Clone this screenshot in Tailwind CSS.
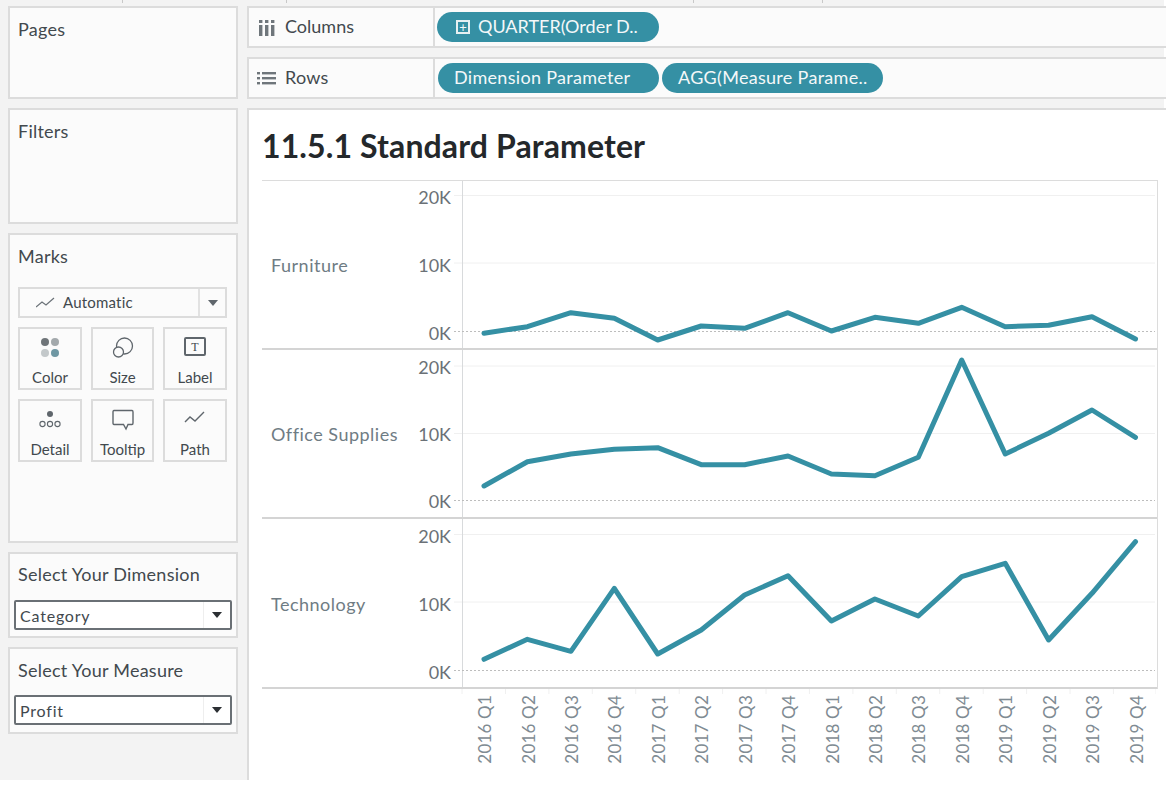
<!DOCTYPE html>
<html lang="en">
<head>
  <meta charset="UTF-8" />
  <title>11.5.1 Standard Parameter</title>
  <script src="https://cdn.jsdelivr.net/npm/@tailwindcss/browser@4"></script>
</head>
<body class="w-[1167px] h-[785px] overflow-hidden bg-white font-['Lato','Open_Sans',sans-serif] text-[#42494e]">

  <div class="relative w-[1164px] h-[780px] bg-[#f3f3f3] pt-[6px] pl-2 flex gap-[9px]">
    <!-- little ticks along the top edge -->
    <span class="absolute top-0 left-[122px] w-px h-[3px] bg-[#c8c8c8]"></span>
    <span class="absolute top-0 left-[286px] w-px h-[3px] bg-[#c8c8c8]"></span>
    <span class="absolute top-0 left-[693px] w-px h-[3px] bg-[#c8c8c8]"></span>
    <span class="absolute top-0 left-[822px] w-px h-[3px] bg-[#c8c8c8]"></span>

    <!-- left cards -->
    <div class="w-[230px] shrink-0 flex flex-col gap-[9px]">
      <div class="h-[93px] bg-[#fbfbfb] border-2 border-[#dcdcdc] pl-[8px] pt-[9px] text-[18px] leading-6 tracking-[0.25px]">Pages</div>
      <div class="h-[116px] bg-[#fbfbfb] border-2 border-[#dcdcdc] pl-[8px] pt-[9px] text-[18px] leading-6 tracking-[0.25px]">Filters</div>

      <div class="h-[310px] bg-[#fbfbfb] border-2 border-[#dcdcdc] pl-[8px] pr-[9px] pt-[9px]">
        <div class="text-[18px] leading-6 tracking-[0.25px]">Marks</div>
        <div class="mt-[19px] h-[31px] border-2 border-[#dcdcdc] flex items-center text-[15px]">
          <svg class="ml-[16px] w-[19px] h-[12px]" viewBox="0 0 19 12" fill="none" stroke="#6b7278" stroke-width="1.2"><path d="M0 10 L6 5 L10 8 L18 1"/></svg>
          <span class="ml-[8px] flex-1 tracking-[0.2px]">Automatic</span>
          <span class="w-[27px] h-full border-l-2 border-[#e2e2e2] flex items-center justify-center">
            <span class="w-0 h-0 border-x-[5px] border-x-transparent border-t-[6px] border-t-[#5f666c]"></span>
          </span>
        </div>
        <div class="mt-[9px] grid grid-cols-[64px_63px_64px] justify-between gap-y-[9px] text-[15px] text-center">
          <div class="h-[63px] border-2 border-[#dcdcdc] flex flex-col items-center">
            <svg class="mt-[8px] w-[22px] h-[22px]" viewBox="0 0 22 22"><circle cx="6" cy="5" r="4" fill="#6f7579"/><circle cx="16" cy="5" r="4" fill="#a3a9ac"/><circle cx="6" cy="16" r="4" fill="#c3c8ca"/><circle cx="16" cy="16" r="4" fill="#6f97a3"/></svg>
            <span class="mt-[8px] leading-5">Color</span>
          </div>
          <div class="h-[63px] border-2 border-[#dcdcdc] flex flex-col items-center">
            <svg class="mt-[8px] w-[24px] h-[22px]" viewBox="0 0 24 22" fill="none" stroke="#5f666c" stroke-width="1.3"><circle cx="13.5" cy="9" r="8"/><circle cx="7.5" cy="15" r="5" fill="#fbfbfb"/></svg>
            <span class="mt-[8px] leading-5">Size</span>
          </div>
          <div class="h-[63px] border-2 border-[#dcdcdc] flex flex-col items-center">
            <span class="mt-[8px] w-[22px] h-[19px] border-2 border-[#5f666c] rounded-[2px] flex items-center justify-center font-['Liberation_Serif',serif] text-[12px] leading-none">T</span>
            <span class="mt-[11px] leading-5">Label</span>
          </div>
          <div class="h-[63px] border-2 border-[#dcdcdc] flex flex-col items-center">
            <svg class="mt-[8px] w-[24px] h-[22px]" viewBox="0 0 24 22" fill="none" stroke="#5f666c" stroke-width="1.1"><circle cx="12" cy="5" r="3" fill="#5f666c" stroke="none"/><circle cx="4.5" cy="15" r="2.6"/><circle cx="12" cy="15" r="2.6"/><circle cx="19.5" cy="15" r="2.6"/></svg>
            <span class="mt-[8px] leading-5">Detail</span>
          </div>
          <div class="h-[63px] border-2 border-[#dcdcdc] flex flex-col items-center">
            <svg class="mt-[8px] w-[24px] h-[22px]" viewBox="0 0 24 22" fill="none" stroke="#5f666c" stroke-width="1.4"><path d="M3 1.5 H21 Q22 1.5 22 3 V14 Q22 15.5 21 15.5 H17 L15 20 L12.5 15.5 H3 Q2 15.5 2 14 V3 Q2 1.5 3 1.5 Z"/></svg>
            <span class="mt-[8px] leading-5">Tooltip</span>
          </div>
          <div class="h-[63px] border-2 border-[#dcdcdc] flex flex-col items-center">
            <svg class="mt-[8px] w-[24px] h-[22px]" viewBox="0 0 24 22" fill="none" stroke="#5f666c" stroke-width="1.4"><path d="M2 13 L7 8 L12 12 L21 3"/></svg>
            <span class="mt-[8px] leading-5">Path</span>
          </div>
        </div>
      </div>

      <div class="h-[86px] bg-[#fbfbfb] border-2 border-[#dcdcdc] pt-[8px]">
        <div class="pl-[8px] text-[18px] leading-6 tracking-[0.25px]">Select Your Dimension</div>
        <div class="ml-[4px] mt-[14px] w-[218px] h-[30px] bg-white border-2 border-[#6a7075] rounded-[2px] flex items-center text-[16px] tracking-[0.8px]">
          <span class="ml-[4px] pt-[1px] flex-1">Category</span>
          <span class="w-[27px] h-full flex items-center justify-center border-l border-[#eeeeee]">
            <span class="w-0 h-0 border-x-[5px] border-x-transparent border-t-[6px] border-t-[#2b2f33]"></span>
          </span>
        </div>
      </div>
      <div class="h-[87px] bg-[#fbfbfb] border-2 border-[#dcdcdc] pt-[9px]">
        <div class="pl-[8px] text-[18px] leading-6 tracking-[0.25px]">Select Your Measure</div>
        <div class="ml-[4px] mt-[13px] w-[218px] h-[30px] bg-white border-2 border-[#6a7075] rounded-[2px] flex items-center text-[16px] tracking-[0.8px]">
          <span class="ml-[4px] pt-[1px] flex-1">Profit</span>
          <span class="w-[27px] h-full flex items-center justify-center border-l border-[#eeeeee]">
            <span class="w-0 h-0 border-x-[5px] border-x-transparent border-t-[6px] border-t-[#2b2f33]"></span>
          </span>
        </div>
      </div>
    </div>

    <!-- right side -->
    <div class="flex-1 flex flex-col gap-[9px]">
      <div class="h-[42px] bg-[#fbfbfb] border-2 border-r-0 border-[#dcdcdc] flex items-center text-[18px]">
        <svg class="ml-[9px] w-[17px] h-[17px]" viewBox="0 0 17 17" fill="#6f767b"><rect x="1" y="1" width="3.4" height="3"/><rect x="1" y="6" width="3.4" height="11"/><rect x="7" y="1" width="3.4" height="3"/><rect x="7" y="6" width="3.4" height="11"/><rect x="13" y="1" width="3.4" height="3"/><rect x="13" y="6" width="3.4" height="11"/></svg>
        <span class="ml-[10px] w-[148px] pb-[1px]">Columns</span>
        <div class="h-full border-l-2 border-[#dcdcdc] pl-[2px] flex items-center">
          <div class="w-[222px] h-[30px] rounded-full bg-[#3590a4] text-[#f4f8f9] flex items-center pl-[19px] text-[18px]">
            <span class="w-[14px] h-[14px] border-2 border-[#e6f0f2] flex items-center justify-center text-[13px] leading-none">+</span>
            <span class="ml-[8px] pb-[1px]">QUARTER(Order D..</span>
          </div>
        </div>
      </div>
      <div class="h-[42px] bg-[#fbfbfb] border-2 border-r-0 border-[#dcdcdc] flex items-center text-[18px]">
        <svg class="ml-[8px] w-[19px] h-[15px]" viewBox="0 0 19 15" fill="#6f767b"><rect x="0" y="1" width="3" height="2.4"/><rect x="5" y="1" width="14" height="2.4"/><rect x="0" y="6" width="3" height="2.4"/><rect x="5" y="6" width="14" height="2.4"/><rect x="0" y="11" width="3" height="2.4"/><rect x="5" y="11" width="14" height="2.4"/></svg>
        <span class="ml-[9px] w-[148px] pb-[2px] tracking-[0.25px]">Rows</span>
        <div class="h-full border-l-2 border-[#dcdcdc] pl-[3px] flex items-center gap-[3px] text-[18px] tracking-[0.3px] text-[#f4f8f9]">
          <div class="w-[221px] h-[30px] rounded-full bg-[#3590a4] flex items-center pl-[16px] pb-[2px]">Dimension Parameter</div>
          <div class="w-[221px] h-[30px] rounded-full bg-[#3590a4] flex items-center pl-[16px] pb-[2px]">AGG(Measure Parame..</div>
        </div>
      </div>

      <div class="flex-1 bg-white border-l-2 border-t-2 border-[#dcdcdc] pl-[13px] pr-[8px]">
        <h1 class="mt-[18px] h-[36px] text-[32px] leading-9 font-bold tracking-[0.12px] text-[#24282b]">11.5.1 Standard Parameter</h1>
        <!-- trellis rows -->
        <div class="mt-[16px] border-t border-r border-[#dcdcdc] h-[509px] flex flex-col">

          <div class="h-[169px] flex border-b-2 border-[#d4d4d4]">
            <div class="w-[135px] pl-[9px] pt-[1px] flex items-center text-[18px] tracking-[0.5px] text-[#6f7c84]">Furniture</div>
            <div class="w-[55px] pr-[1px] pt-[4px] flex flex-col gap-[44px] text-right text-[18px] leading-6 text-[#6b7177]">
              <span>20K</span><span>10K</span><span>0K</span>
            </div>
            <svg class="block" width="703" height="167" viewBox="452 181 703 167" fill="none">
              <path d="M454 195.5H1155M454 263H1155" stroke="#f0f0f0"/>
              <path d="M462.5 181V348" stroke="#d8dadc"/>
              <path d="M454 331.5H1155" stroke="#bdbdbd" stroke-dasharray="2 2"/>
              <polyline stroke="#3590a4" stroke-width="5" stroke-linecap="round" stroke-linejoin="round" points="484,333.3 527.4,326.7 570.9,312.7 614.3,318.3 657.7,340 701.2,326 744.6,328.3 788,312.7 831.4,331 874.9,317.3 918.3,323.3 961.7,307.3 1005.2,326.7 1048.6,325.3 1092,316.7 1135.5,339"/>
            </svg>
          </div>

          <div class="h-[169px] flex border-b-2 border-[#d4d4d4]">
            <div class="w-[135px] pl-[9px] pt-[1px] flex items-center text-[18px] tracking-[0.5px] text-[#6f7c84] whitespace-nowrap">Office Supplies</div>
            <div class="w-[55px] pr-[1px] pt-[5px] flex flex-col gap-[43px] text-right text-[18px] leading-6 text-[#6b7177]">
              <span>20K</span><span>10K</span><span>0K</span>
            </div>
            <svg class="block" width="703" height="167" viewBox="452 350 703 167" fill="none">
              <path d="M454 366H1155M454 433.5H1155" stroke="#f0f0f0"/>
              <path d="M462.5 350V517" stroke="#d8dadc"/>
              <path d="M454 500.5H1155" stroke="#bdbdbd" stroke-dasharray="2 2"/>
              <polyline stroke="#3590a4" stroke-width="5" stroke-linecap="round" stroke-linejoin="round" points="484,486 527.4,461.7 570.9,454 614.3,449.3 657.7,447.7 701.2,464.7 744.6,464.7 788,456 831.4,474 874.9,475.7 918.3,457.3 961.7,360 1005.2,454 1048.6,433.3 1092,410 1135.5,437.3"/>
            </svg>
          </div>

          <div class="h-[170px] flex border-b-2 border-[#d4d4d4]">
            <div class="w-[135px] pl-[9px] pt-[2px] flex items-center text-[18px] tracking-[0.5px] text-[#6f7c84]">Technology</div>
            <div class="w-[55px] pr-[1px] pt-[5px] flex flex-col gap-[44px] text-right text-[18px] leading-6 text-[#6b7177]">
              <span>20K</span><span>10K</span><span>0K</span>
            </div>
            <svg class="block" width="703" height="168" viewBox="452 519 703 168" fill="none">
              <path d="M454 534.5H1155M454 602H1155" stroke="#f0f0f0"/>
              <path d="M462.5 519V687" stroke="#d8dadc"/>
              <path d="M454 670.5H1155" stroke="#bdbdbd" stroke-dasharray="2 2"/>
              <polyline stroke="#3590a4" stroke-width="5" stroke-linecap="round" stroke-linejoin="round" points="484,659.3 527.4,639.3 570.9,651.3 614.3,588.3 657.7,654 701.2,630 744.6,595 788,575.7 831.4,621 874.9,599 918.3,616 961.7,576.7 1005.2,563.3 1048.6,640 1092,593.3 1135.5,541.7"/>
            </svg>
          </div>
        </div>

        <!-- quarter labels along the bottom -->
        <svg class="block" width="894" height="6" viewBox="262 0 894 6" fill="none" stroke="#f0f0f0">
          <path d="M462 0V5M505.5 0V5M548.9 0V5M592.3 0V5M635.7 0V5M679.2 0V5M722.6 0V5M766 0V5M809.4 0V5M852.9 0V5M896.3 0V5M939.7 0V5M983.2 0V5M1026.6 0V5M1070 0V5M1113.4 0V5M1156 0V5"/>
        </svg>
        <div class="pl-[201px] flex text-[17px] leading-none tracking-[0.2px] text-[#7f8b93]">
          <span class="w-[43.43px] flex justify-center"><span class="[writing-mode:vertical-rl] rotate-180">2016 Q1</span></span>
          <span class="w-[43.43px] flex justify-center"><span class="[writing-mode:vertical-rl] rotate-180">2016 Q2</span></span>
          <span class="w-[43.43px] flex justify-center"><span class="[writing-mode:vertical-rl] rotate-180">2016 Q3</span></span>
          <span class="w-[43.43px] flex justify-center"><span class="[writing-mode:vertical-rl] rotate-180">2016 Q4</span></span>
          <span class="w-[43.43px] flex justify-center"><span class="[writing-mode:vertical-rl] rotate-180">2017 Q1</span></span>
          <span class="w-[43.43px] flex justify-center"><span class="[writing-mode:vertical-rl] rotate-180">2017 Q2</span></span>
          <span class="w-[43.43px] flex justify-center"><span class="[writing-mode:vertical-rl] rotate-180">2017 Q3</span></span>
          <span class="w-[43.43px] flex justify-center"><span class="[writing-mode:vertical-rl] rotate-180">2017 Q4</span></span>
          <span class="w-[43.43px] flex justify-center"><span class="[writing-mode:vertical-rl] rotate-180">2018 Q1</span></span>
          <span class="w-[43.43px] flex justify-center"><span class="[writing-mode:vertical-rl] rotate-180">2018 Q2</span></span>
          <span class="w-[43.43px] flex justify-center"><span class="[writing-mode:vertical-rl] rotate-180">2018 Q3</span></span>
          <span class="w-[43.43px] flex justify-center"><span class="[writing-mode:vertical-rl] rotate-180">2018 Q4</span></span>
          <span class="w-[43.43px] flex justify-center"><span class="[writing-mode:vertical-rl] rotate-180">2019 Q1</span></span>
          <span class="w-[43.43px] flex justify-center"><span class="[writing-mode:vertical-rl] rotate-180">2019 Q2</span></span>
          <span class="w-[43.43px] flex justify-center"><span class="[writing-mode:vertical-rl] rotate-180">2019 Q3</span></span>
          <span class="w-[43.43px] flex justify-center"><span class="[writing-mode:vertical-rl] rotate-180">2019 Q4</span></span>
        </div>
      </div>
    </div>
  </div>
</body>
</html>
